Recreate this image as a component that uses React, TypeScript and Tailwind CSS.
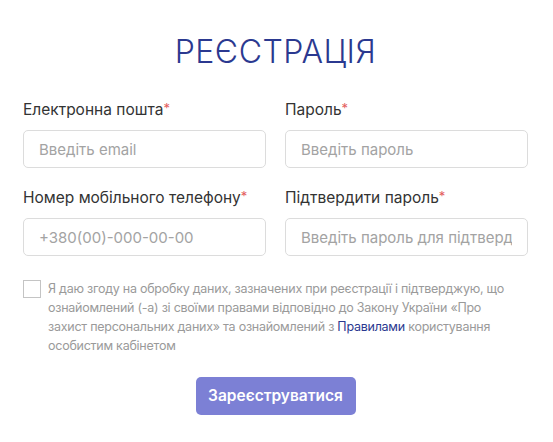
import React from "react";

const font = { fontFamily: "Inter, 'Noto Sans', sans-serif" };

function Field({
  label,
  placeholder,
  type = "text",
}: {
  label: string;
  placeholder: string;
  type?: string;
}) {
  return (
    <div className="flex flex-col">
      <label className="text-[15.5px] leading-5 text-[#333] mb-[10px]">
        {label}
        <span className="text-[#e35d5d] align-top text-[13px] leading-4">*</span>
      </label>
      <input
        type={type}
        placeholder={placeholder}
        className="h-[38px] w-full rounded-[5px] border border-[#dcdcdc] bg-white px-[15px] text-[15px] text-[#333] placeholder:text-[#a3a3a3] outline-none"
      />
    </div>
  );
}

export default function App() {
  return (
    <div className="min-h-screen bg-white" style={font}>
      <div className="pl-[23px] pr-[25px] pt-[32px]">
        <h1 className="text-center text-[32px] leading-10 font-light tracking-[0.5px] text-[#2b3990] mb-[28px]">
          РЕЄСТРАЦІЯ
        </h1>

        <div className="grid grid-cols-2 gap-x-[19px] gap-y-[20px]">
          <Field label="Електронна пошта" placeholder="Введіть email" type="email" />
          <Field label="Пароль" placeholder="Введіть пароль" />
          <Field label="Номер мобільного телефону" placeholder="+380(00)-000-00-00" />
          <Field label="Підтвердити пароль" placeholder="Введіть пароль для підтвердження" />
        </div>

        <div className="mt-[23px] flex items-start gap-[7px]">
          <input
            type="checkbox"
            className="mt-[1px] h-[18px] w-[18px] shrink-0 appearance-none border border-[#c4c4c4] bg-white"
          />
          <p className="whitespace-nowrap text-[12.5px] leading-[19px] tracking-[-0.25px] text-[#9a9a9a]">
            Я даю згоду на обробку даних, зазначених при реєстрації і підтверджую, що
            <br />
            ознайомлений (-а) зі своїми правами відповідно до Закону України «Про
            <br />
            захист персональних даних» та ознайомлений з{" "}
            <a href="#" className="text-[#2b3990]">
              Правилами
            </a>{" "}
            користування
            <br />
            особистим кабінетом
          </p>
        </div>

        <div className="mt-[22px] flex justify-center">
          <button className="h-[38px] w-[160px] rounded-[5px] bg-[#7c80d5] text-[15.5px] font-semibold text-white">
            Зареєструватися
          </button>
        </div>
      </div>
    </div>
  );
}
